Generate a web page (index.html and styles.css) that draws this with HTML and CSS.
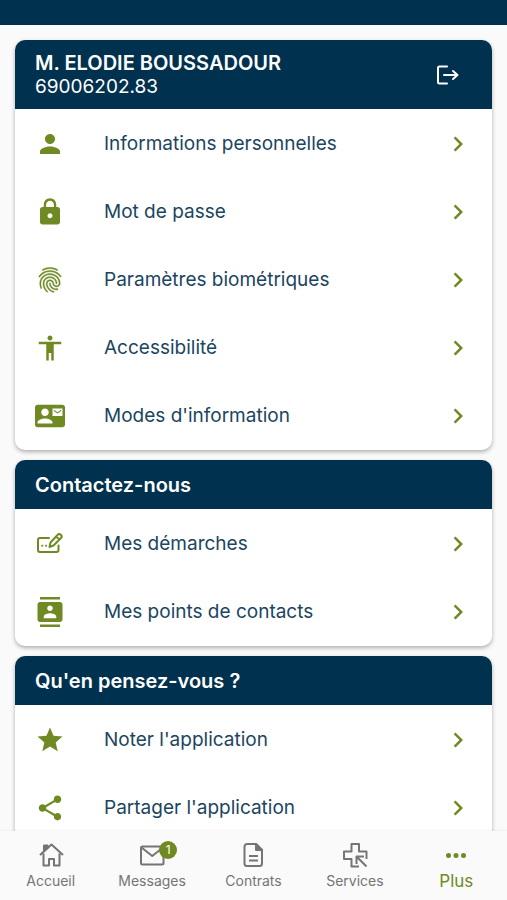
FILE: index.html
```html
<!DOCTYPE html>
<html lang="fr">
<head>
    <meta charset="utf-8">
    <meta name="viewport" content="width=device-width, initial-scale=1">
    <title>Plus</title>
    <link rel="stylesheet" href="styles.css">
</head>
<body>
    <svg class="sprite" aria-hidden="true">
        <symbol id="chevron" viewBox="0 0 24 24">
            <path d="M10 6L8.59 7.41 13.17 12l-4.58 4.59L10 18l6-6z"/>
        </symbol>
    </svg>

    <div class="topbar"></div>

    <main class="content">
        <section class="card">
            <header class="card-header profile">
                <div>
                    <h1>M. ELODIE BOUSSADOUR</h1>
                    <p>69006202.83</p>
                </div>
                <button type="button" class="logout" aria-label="Se déconnecter">
                    <svg class="icon line" viewBox="0 0 30 30"><path d="M14 6.5H6.5A1.5 1.5 0 0 0 5 8v14a1.5 1.5 0 0 0 1.5 1.5H14M11 15h13M20 11l4.500 4-4.500 4"/></svg>
                </button>
            </header>
            <ul class="menu">
                <li><a href="#informations">
                    <svg class="icon" viewBox="0 0 24 24"><path d="M12 12c2.210 0 4-1.790 4-4s-1.790-4-4-4-4 1.790-4 4 1.790 4 4 4zm0 2c-2.670 0-8 1.340-8 4v2h16v-2c0-2.660-5.330-4-8-4z"/></svg>
                    <span>Informations personnelles</span>
                    <svg class="icon"><use href="#chevron"/></svg>
                </a></li>
                <li><a href="#mot-de-passe">
                    <svg class="icon" viewBox="0 0 24 24"><path d="M18 8h-1V6c0-2.760-2.240-5-5-5S7 3.240 7 6v2H6c-1.100 0-2 .9-2 2v10c0 1.100.9 2 2 2h12c1.100 0 2-.9 2-2V10c0-1.100-.9-2-2-2zm-6 9c-1.100 0-2-.9-2-2s.9-2 2-2 2 .9 2 2-.9 2-2 2zm3.100-9H8.900V6c0-1.710 1.390-3.100 3.100-3.100 1.710 0 3.100 1.390 3.100 3.100v2z"/></svg>
                    <span>Mot de passe</span>
                    <svg class="icon"><use href="#chevron"/></svg>
                </a></li>
                <li><a href="#biometrie">
                    <svg class="icon fingerprint" viewBox="0 0 24 24"><path d="M17.81 4.47c-.08 0-.16-.02-.23-.06C15.66 3.42 14 3 12.01 3c-1.98 0-3.86.47-5.57 1.41-.24.13-.54.04-.68-.2-.13-.24-.04-.55.2-.68C7.82 2.52 9.86 2 12.01 2c2.13 0 3.99.47 6.03 1.52.25.13.34.43.21.67-.09.18-.26.28-.44.28zM3.5 9.72c-.1 0-.2-.03-.29-.09-.23-.16-.28-.47-.12-.7.99-1.4 2.25-2.5 3.75-3.27C9.98 4.04 14 4.03 17.15 5.65c1.5.77 2.76 1.86 3.75 3.25.16.22.11.54-.12.7-.23.16-.54.11-.7-.12-.9-1.26-2.04-2.25-3.39-2.94-2.87-1.47-6.54-1.47-9.4.01-1.36.7-2.5 1.7-3.4 2.96-.08.14-.23.21-.39.21zm6.25 12.07c-.13 0-.26-.05-.35-.15-.87-.87-1.34-1.43-2.01-2.64-.69-1.23-1.05-2.73-1.05-4.34 0-2.97 2.54-5.39 5.66-5.39s5.66 2.42 5.66 5.39c0 .28-.22.5-.5.5s-.5-.22-.5-.5c0-2.42-2.09-4.39-4.66-4.39-2.57 0-4.66 1.97-4.66 4.39 0 1.44.32 2.77.93 3.85.64 1.15 1.08 1.64 1.85 2.42.19.2.19.51 0 .71-.11.1-.24.15-.37.15zm7.17-1.85c-1.19 0-2.24-.3-3.1-.89-1.49-1.01-2.38-2.65-2.38-4.39 0-.28.22-.5.5-.5s.5.22.5.5c0 1.41.72 2.74 1.94 3.56.71.48 1.54.71 2.54.71.24 0 .64-.03 1.04-.1.27-.05.53.13.58.41.05.27-.13.53-.41.58-.57.11-1.07.12-1.21.12zM14.91 22c-.04 0-.09-.01-.13-.02-1.59-.44-2.63-1.03-3.72-2.1-1.4-1.39-2.17-3.24-2.17-5.22 0-1.62 1.38-2.94 3.08-2.94 1.7 0 3.08 1.32 3.08 2.94 0 1.07.93 1.94 2.08 1.94s2.08-.87 2.08-1.94c0-3.77-3.25-6.83-7.25-6.83-2.84 0-5.44 1.58-6.61 4.03-.39.81-.59 1.76-.59 2.8 0 .78.07 2.01.67 3.61.1.26-.03.55-.29.64-.26.1-.55-.04-.64-.29-.49-1.31-.73-2.61-.73-3.96 0-1.2.23-2.29.68-3.24 1.33-2.79 4.28-4.6 7.51-4.6 4.55 0 8.25 3.51 8.25 7.83 0 1.62-1.38 2.94-3.08 2.94s-3.08-1.32-3.08-2.94c0-1.07-.93-1.94-2.08-1.94s-2.08.87-2.08 1.94c0 1.71.66 3.31 1.87 4.51.95.94 1.86 1.46 3.27 1.85.27.07.42.35.35.61-.05.23-.26.38-.47.38z"/></svg>
                    <span>Paramètres biométriques</span>
                    <svg class="icon"><use href="#chevron"/></svg>
                </a></li>
                <li><a href="#accessibilite">
                    <svg class="icon" viewBox="0 0 24 24"><path d="M12 2c1.100 0 2 .9 2 2s-.9 2-2 2-2-.9-2-2 .9-2 2-2zm9 7h-6v13h-2v-6h-2v6H9V9H3V7h18v2z"/></svg>
                    <span>Accessibilité</span>
                    <svg class="icon"><use href="#chevron"/></svg>
                </a></li>
                <li><a href="#modes">
                    <svg class="icon" viewBox="0 0 24 24"><path d="M21 8V7l-3 2-3-2v1l3 2 3-2zm1-5H2C.9 3 0 3.900 0 5v14c0 1.100.9 2 2 2h20c1.100 0 1.990-.9 1.990-2L24 5c0-1.100-.9-2-2-2zM8 6c1.660 0 3 1.340 3 3s-1.340 3-3 3-3-1.340-3-3 1.340-3 3-3zm6 12H2v-1c0-2 4-3.100 6-3.100s6 1.100 6 3.100v1zm8-6h-8V6h8v6z"/></svg>
                    <span>Modes d'information</span>
                    <svg class="icon"><use href="#chevron"/></svg>
                </a></li>
            </ul>
        </section>

        <section class="card">
            <header class="card-header">
                <h2>Contactez-nous</h2>
            </header>
            <ul class="menu">
                <li><a href="#demarches">
                    <svg class="icon line" viewBox="0 0 30 30">
                        <path d="M14 9H5a2 2 0 0 0-2 2v10a2 2 0 0 0 2 2h16.500a2 2 0 0 0 2-2V16.500"/>
                        <path d="M14.500 18l1-4.500 7-7.500a2 2 0 0 1 3.500 3l-7.500 7.500zM21 7.500l3.500 3"/>
                        <path d="M7.200 16.700h.1M11 16.700h.1"/>
                    </svg>
                    <span>Mes démarches</span>
                    <svg class="icon"><use href="#chevron"/></svg>
                </a></li>
                <li><a href="#contacts">
                    <svg class="icon" viewBox="0 0 24 24"><path d="M20 0H4v2h16V0zM4 24h16v-2H4v2zM20 4H4c-1.100 0-2 .9-2 2v12c0 1.100.9 2 2 2h16c1.100 0 2-.9 2-2V6c0-1.100-.9-2-2-2zm-8 2.750c1.240 0 2.250 1.010 2.250 2.250s-1.010 2.250-2.250 2.250S9.750 10.240 9.750 9 10.760 6.750 12 6.750zM17 17H7v-1.500c0-1.670 3.330-2.500 5-2.500s5 .83 5 2.500V17z"/></svg>
                    <span>Mes points de contacts</span>
                    <svg class="icon"><use href="#chevron"/></svg>
                </a></li>
            </ul>
        </section>

        <section class="card">
            <header class="card-header">
                <h2>Qu'en pensez-vous ?</h2>
            </header>
            <ul class="menu">
                <li><a href="#noter">
                    <svg class="icon" viewBox="0 0 24 24"><path d="M12 17.270L18.180 21l-1.640-7.030L22 9.240l-7.190-.61L12 2 9.190 8.630 2 9.240l5.460 4.730L5.820 21z"/></svg>
                    <span>Noter l'application</span>
                    <svg class="icon"><use href="#chevron"/></svg>
                </a></li>
                <li><a href="#partager">
                    <svg class="icon" viewBox="0 0 24 24"><path d="M18 16.080c-.76 0-1.440.3-1.960.77L8.910 12.700c.05-.23.09-.46.09-.7s-.04-.47-.09-.7l7.050-4.110c.54.5 1.250.81 2.040.81 1.660 0 3-1.340 3-3s-1.340-3-3-3-3 1.340-3 3c0 .24.04.47.09.7L8.040 9.810C7.500 9.310 6.790 9 6 9c-1.660 0-3 1.340-3 3s1.340 3 3 3c.79 0 1.500-.31 2.040-.81l7.120 4.160c-.05.21-.08.43-.08.65 0 1.610 1.310 2.920 2.920 2.920 1.610 0 2.920-1.310 2.920-2.920s-1.310-2.920-2.920-2.920z"/></svg>
                    <span>Partager l'application</span>
                    <svg class="icon"><use href="#chevron"/></svg>
                </a></li>
            </ul>
        </section>
    </main>

    <nav class="tabbar">
        <a href="#accueil">
            <svg class="tab-icon" viewBox="0 0 26 26"><path d="M2 13 13.500 2.500 25 13M5.500 11.500V23.500h5.500V17h5v6.500h5.500V11.500"/><path d="M6 9V3.500h3.500V6z" fill="currentColor"/></svg>
            <span>Accueil</span>
        </a>
        <a href="#messages">
            <span class="with-badge">
                <svg class="tab-icon" viewBox="0 0 26 26"><rect x="2" y="4.500" width="22.500" height="18" rx="1.500"/><path d="M2.500 5.500 13.250 14 24 5.500"/></svg>
                <span class="badge">1</span>
            </span>
            <span>Messages</span>
        </a>
        <a href="#contrats">
            <svg class="tab-icon" viewBox="0 0 26 26"><path d="M16 2H7a2.500 2.500 0 0 0-2.500 2.500v17A2.500 2.500 0 0 0 7 24h12.500a2.500 2.500 0 0 0 2.500-2.500V8zM9 14h9M9 18.500h9"/><path d="M16 2v6h6z" fill="currentColor"/></svg>
            <span>Contrats</span>
        </a>
        <a href="#services">
            <svg class="tab-icon" viewBox="0 0 26 26"><path d="M17 24.500H9.500v-7.500H2V9.500h7.500V2H17v7.500h7.500V17M14.500 22v-7.500H22M15 15l9.500 9.500"/></svg>
            <span>Services</span>
        </a>
        <a href="#plus" class="active">
            <svg class="tab-icon dots" viewBox="0 0 26 26"><circle cx="5.500" cy="13.500" r="2.500"/><circle cx="13" cy="13.500" r="2.500"/><circle cx="20.500" cy="13.500" r="2.500"/></svg>
            <span>Plus</span>
        </a>
    </nav>
</body>
</html>
```
FILE: styles.css
```css
* {
    box-sizing: border-box;
}
body {
    margin: 0;
    height: 100vh;
    display: flex;
    flex-direction: column;
    font-family: Inter, Roboto, sans-serif;
    font-size: 19px;
    line-height: 24px;
    color: #1b4560;
    background-color: #fafafa;
}
h1, h2, p, ul {
    margin: 0;
    padding: 0;
}
h1, h2 {
    font-size: 20px;
    font-weight: 600;
}
a {
    color: inherit;
    text-decoration: none;
}
.sprite {
    display: none;
}
.topbar {
    flex: none;
    height: 25px;
    background-color: #00314e;
}
.content {
    flex: 1;
    min-height: 0;
    overflow-y: auto;
    scrollbar-width: none;
    padding: 15px;
    display: flex;
    flex-direction: column;
    gap: 10px;
}
.card {
    flex: none;
    overflow: hidden;
    border-radius: 10px;
    background-color: white;
    box-shadow: 0 2px 4px rgba(0,0,0,0.3);
}
.card-header {
    display: flex;
    align-items: center;
    justify-content: space-between;
    min-height: 49px;
    padding: 0 20px;
    color: white;
    background-color: #00314e;
}
.profile {
    min-height: 69px;
    padding-right: 29px;
}
.logout {
    display: flex;
    padding: 0;
    border: none;
    color: white;
    background: none;
    cursor: pointer;
}
.icon {
    flex: none;
    width: 30px;
    height: 30px;
    fill: currentColor;
}
.line {
    fill: none;
    stroke: currentColor;
    stroke-width: 2;
    stroke-linecap: round;
    stroke-linejoin: round;
}
.fingerprint {
    stroke: currentColor;
    stroke-width: 0.3;
}
.menu {
    list-style: none;
    padding-top: 1px;
}
.menu a {
    display: flex;
    align-items: center;
    height: 68px;
    padding: 0 19px 0 20px;
}
.menu span {
    flex: 1;
    padding-left: 39px;
}
.menu .icon {
    color: #6f8a22;
}
.tabbar {
    flex: none;
    display: grid;
    grid-template-columns: repeat(5, 1fr);
    height: 69px;
    padding-top: 11px;
    font-size: 14px;
    color: #757575;
    background-color: #fafafa;
    box-shadow: 0 -1px 2px rgba(0,0,0,0.05);
    z-index: 1;
}
.tabbar a {
    display: flex;
    flex-direction: column;
    align-items: center;
    gap: 1px;
}
.tab-icon {
    display: block;
    width: 26px;
    height: 26px;
    fill: none;
    stroke: currentColor;
    stroke-width: 2;
    stroke-linejoin: round;
}
.dots {
    fill: currentColor;
    stroke: none;
}
.with-badge {
    position: relative;
}
.badge {
    position: absolute;
    top: -1px;
    right: -12px;
    width: 18px;
    height: 18px;
    border-radius: 50%;
    font-size: 12px;
    line-height: 18px;
    text-align: center;
    color: white;
    background-color: #6f8a22;
}
.tabbar .active {
    font-size: 17px;
    color: #6f8a22;
}
```
